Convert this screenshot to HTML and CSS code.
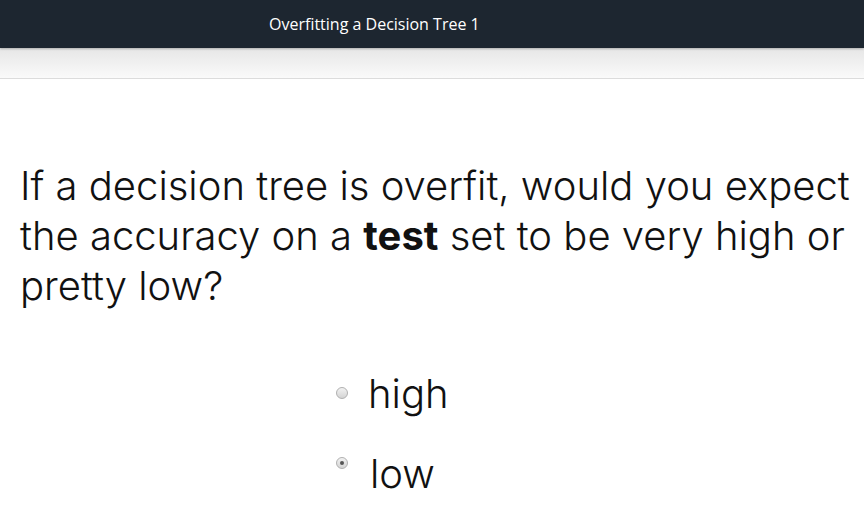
FILE: index.html
```html
<!DOCTYPE html>
<html>
<head>
<meta charset="utf-8">
<link rel="stylesheet" href="styles.css">
</head>
<body>
<header class="topbar">
  <div class="title">Overfitting a Decision Tree 1</div>
</header>
<div class="subbar"></div>
<main class="content">
  <p class="question">If a decision tree is overfit, would you expect the accuracy on a <b>test</b> set to be very high or pretty low?</p>
  <div class="options">
    <div class="option">
      <span class="radio radio-mid"></span>
      <span class="label">high</span>
    </div>
    <div class="option option-low">
      <span class="radio radio-top checked"></span>
      <span class="label">low</span>
    </div>
  </div>
</main>
</body>
</html>
```
FILE: styles.css
```css
html, body {
  margin: 0;
  padding: 0;
  background: #ffffff;
  overflow: hidden;
}
.topbar {
  height: 48px;
  background: #1d2630;
  display: flex;
  align-items: center;
  padding-left: 269px;
  box-shadow: 0 1px 2px rgba(0,0,0,0.25);
  position: relative;
  z-index: 1;
}
.title {
  font-family: "Open Sans", sans-serif;
  font-size: 16px;
  color: #ffffff;
}
.subbar {
  height: 30px;
  background: linear-gradient(#e6e6e6, #fafafa);
  border-bottom: 1px solid #dcdcdc;
}
.content {
  padding: 82px 0 0 20px;
}
.question {
  margin: 0;
  font-family: Inter, "Liberation Sans", sans-serif;
  font-size: 40px;
  line-height: 50px;
  color: #111;
  font-weight: 300;
}
.question b {
  font-weight: 700;
}
.options {
  margin-top: 58px;
  padding-left: 316px;
  display: flex;
  flex-direction: column;
}
.option {
  display: flex;
  align-items: flex-start;
  height: 80px;
  font-family: Inter, "Liberation Sans", sans-serif;
  font-weight: 300;
  font-size: 40px;
  line-height: 50px;
  color: #111;
}
.label {
  margin-left: 20px;
}
.option-low .label {
  margin-left: 22px;
}
.radio {
  width: 10px;
  height: 10px;
  border-radius: 50%;
  border: 1px solid #b0b0b0;
  background: linear-gradient(#f2f2f2, #d4d4d4);
  box-sizing: content-box;
  position: relative;
  flex: none;
}
.radio-mid {
  margin-top: 18px;
}
.radio-top {
  margin-top: 8px;
}
.radio.checked::after {
  content: "";
  position: absolute;
  left: 3px;
  top: 3px;
  width: 4px;
  height: 4px;
  border-radius: 50%;
  background: #555;
}
```
